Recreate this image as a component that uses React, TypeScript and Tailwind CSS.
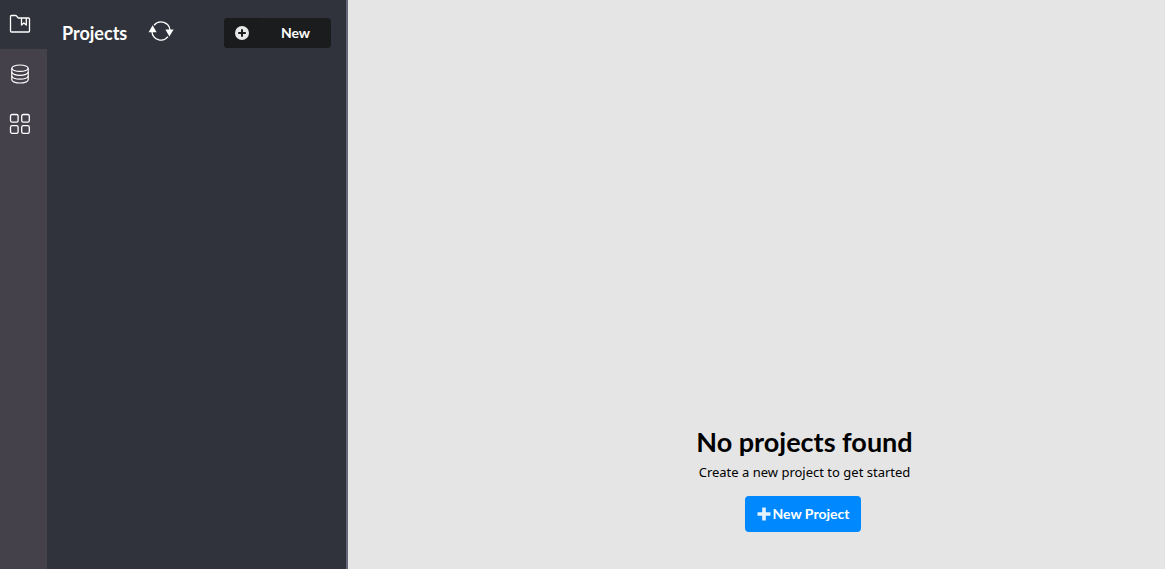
import React from "react";

function ProjectsIcon() {
  return (
    <svg width="22" height="20" viewBox="0 0 22 20" fill="none" stroke="#fff" strokeWidth="1.3" strokeLinejoin="round" aria-hidden="true">
      <path d="M1.5 17V2.5a1 1 0 0 1 1-1h4.2a1 1 0 0 1 .7.3l1.9 2.2h10.2a1 1 0 0 1 1 1v12a1 1 0 0 1-1 1h-17a1 1 0 0 1-1-1Z" />
      <path d="M12.5 4v7l2.4-2 2.4 2V4" />
    </svg>
  );
}

function DatabaseIcon() {
  return (
    <svg width="20" height="20" viewBox="0 0 20 20" fill="none" stroke="#fff" strokeWidth="1.2" aria-hidden="true">
      <ellipse cx="10" cy="4.2" rx="8.2" ry="3.2" />
      <path d="M1.8 4.2v11.6c0 1.8 3.7 3.2 8.2 3.2s8.2-1.4 8.2-3.2V4.2" />
      <path d="M1.8 8.1c0 1.8 3.7 3.2 8.2 3.2s8.2-1.4 8.2-3.2M1.8 12c0 1.8 3.7 3.2 8.2 3.2s8.2-1.4 8.2-3.2" />
    </svg>
  );
}

function GridIcon() {
  return (
    <svg width="22" height="22" viewBox="0 0 22 22" fill="none" stroke="#fff" strokeWidth="1.3" aria-hidden="true">
      <rect x="1.5" y="1.5" width="7.6" height="7.6" rx="1.6" />
      <rect x="12.7" y="1.5" width="7.6" height="7.6" rx="1.6" />
      <rect x="1.5" y="12.7" width="7.6" height="7.6" rx="1.6" />
      <rect x="12.7" y="12.7" width="7.6" height="7.6" rx="1.6" />
    </svg>
  );
}

function RefreshIcon() {
  return (
    <svg width="26" height="22" viewBox="0 0 26 22" fill="none" stroke="#fff" strokeWidth="1.3" aria-hidden="true">
      <path d="M6 5.3A9 9 0 0 1 22 10.5M20 16.7A9 9 0 0 1 4 11.5" />
      <path d="M4.6 5.2.6 12.2h8ZM21.4 16.6l-4-7.2h8.2Z" fill="#fff" stroke="none" />
    </svg>
  );
}

const navItems = [
  { label: "Projects", icon: <ProjectsIcon />, active: true },
  { label: "Data", icon: <DatabaseIcon />, active: false },
  { label: "Apps", icon: <GridIcon />, active: false },
];

export default function App() {
  return (
    <div className="flex min-h-screen bg-[#e5e5e5] font-['Lato',sans-serif]">
      <nav className="flex w-[47px] shrink-0 flex-col bg-[#44414b]">
        {navItems.map((item) => (
          <button
            key={item.label}
            aria-label={item.label}
            className={
              item.active
                ? "flex h-[49px] w-full items-center justify-center bg-[#30333b] pr-[7px] pb-[2px]"
                : "flex h-[50px] w-full items-center justify-center pr-[7px]"
            }
          >
            {item.icon}
          </button>
        ))}
      </nav>
      <aside className="w-[301px] shrink-0 border-r-2 border-[#646876] bg-[#30333b]">
        <header className="flex items-center pt-[18px] pr-[15px] pl-[15px]">
          <h1 className="text-lg leading-[30px] font-bold text-white">Projects</h1>
          <button aria-label="Refresh" className="ml-[21px] pb-1">
            <RefreshIcon />
          </button>
          <button className="ml-auto flex h-[30px] w-[107px] items-center rounded bg-[#1b1c1d] text-sm font-bold text-white">
            <span className="flex h-full w-9 items-center justify-center rounded-l bg-[#1a1b1c]">
              <svg width="14" height="14" viewBox="0 0 14 14" aria-hidden="true">
                <circle cx="7" cy="7" r="7" fill="#e8e8e8" />
                <path d="M7 3.2v7.6M3.2 7h7.6" stroke="#1b1c1d" strokeWidth="2" />
              </svg>
            </span>
            <span className="flex-1 text-center">New</span>
          </button>
        </header>
      </aside>
      <main className="flex flex-1 flex-col items-center justify-end pb-[37px] pl-24 text-black">
        <h2 className="text-[27px] leading-8 font-bold">No projects found</h2>
        <p className="font-['Noto_Sans',sans-serif] text-[13px] leading-7">Create a new project to get started</p>
        <button className="mt-[10px] mr-[3px] flex h-9 items-center gap-[2px] rounded bg-[#0089ff] px-3 text-sm font-bold text-white">
          <svg width="14" height="14" viewBox="0 0 14 14" aria-hidden="true">
            <path d="M7 .5v13M.5 7h13" stroke="#e5f3ff" strokeWidth="3.6" />
          </svg>
          New Project
        </button>
      </main>
    </div>
  );
}
